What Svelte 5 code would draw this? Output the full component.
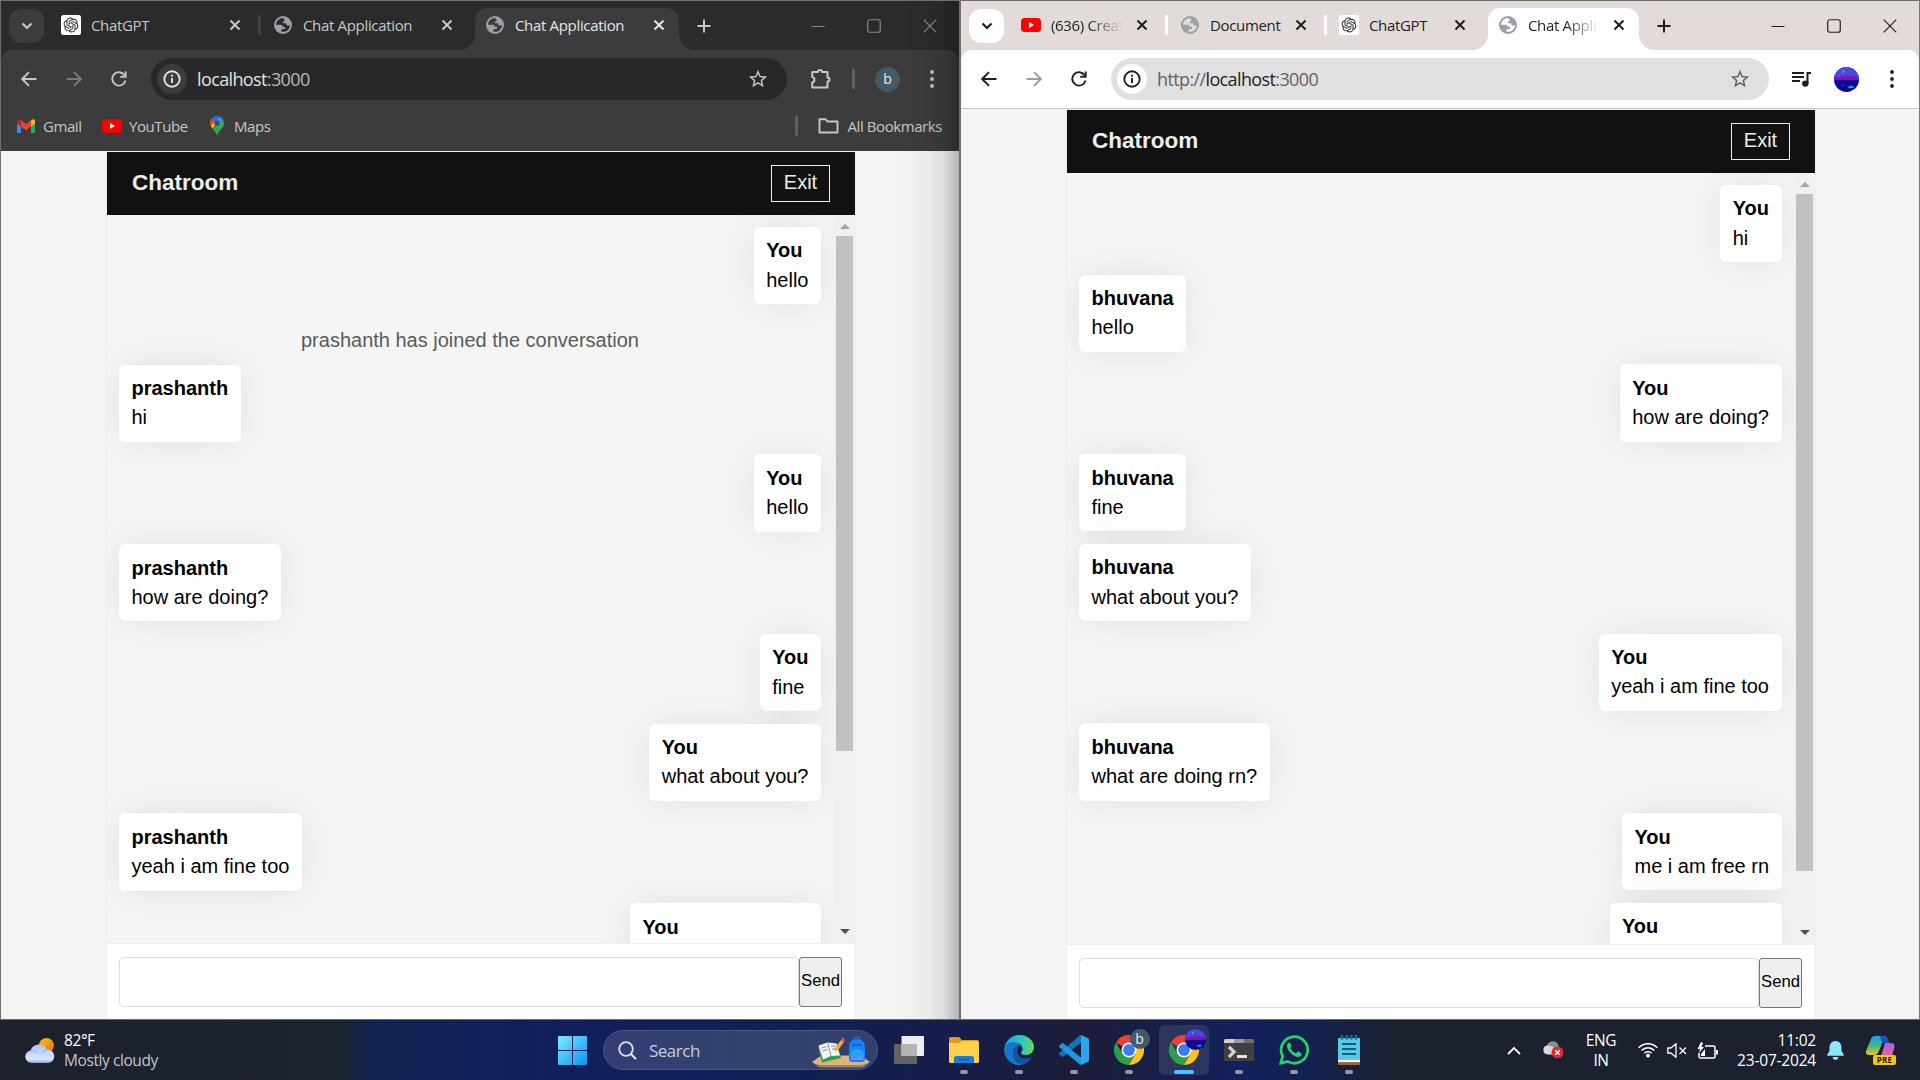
<script>
  const windows = [
    {
      theme: 'dark',
      tabs: [
        { icon: 'gpt', title: 'ChatGPT' },
        { icon: 'globe', title: 'Chat Application' },
        { icon: 'globe', title: 'Chat Application', active: true }
      ],
      scheme: '',
      messages: [
        { from: 'You', text: 'hello', mine: true },
        { update: 'prashanth has joined the conversation' },
        { from: 'prashanth', text: 'hi' },
        { from: 'You', text: 'hello', mine: true },
        { from: 'prashanth', text: 'how are doing?' },
        { from: 'You', text: 'fine', mine: true },
        { from: 'You', text: 'what about you?', mine: true },
        { from: 'prashanth', text: 'yeah i am fine too' },
        { from: 'You', width: 166, mine: true }
      ]
    },
    {
      theme: 'light',
      tabs: [
        { icon: 'youtube', title: '(636) Creat', fade: true },
        { icon: 'globe', title: 'Document' },
        { icon: 'gpt', title: 'ChatGPT' },
        { icon: 'globe', title: 'Chat Appli', fade: true, active: true }
      ],
      scheme: 'http://',
      messages: [
        { from: 'You', text: 'hi', mine: true },
        { from: 'bhuvana', text: 'hello' },
        { from: 'You', text: 'how are doing?', mine: true },
        { from: 'bhuvana', text: 'fine' },
        { from: 'bhuvana', text: 'what about you?' },
        { from: 'You', text: 'yeah i am fine too', mine: true },
        { from: 'bhuvana', text: 'what are doing rn?' },
        { from: 'You', text: 'me i am free rn', mine: true },
        { from: 'You', width: 147, mine: true }
      ]
    }
  ];
  const apps = ['explorer', 'edge', 'code', 'chromeB', 'chromeP', 'terminal', 'whatsapp', 'notepad'];
</script>

{#snippet youtube()}
  <svg width="20" height="14" viewBox="0 0 20 14"><rect width="20" height="14" rx="3.5" fill="#f00" /><path d="M8 4l5 3-5 3z" fill="#fff" /></svg>
{/snippet}

{#snippet favicon(name)}
  {#if name === 'gpt'}
    <svg width="20" height="20" viewBox="0 0 20 20"><rect width="20" height="20" rx="2.5" fill="#fff" />
      <path transform="translate(2.6 2.6) scale(.617)" fill="#222" d="M22.2819 9.8211a5.9847 5.9847 0 0 0-.5157-4.9108 6.0462 6.0462 0 0 0-6.5098-2.9A6.0651 6.0651 0 0 0 4.9807 4.1818a5.9847 5.9847 0 0 0-3.9977 2.9 6.0462 6.0462 0 0 0 .7427 7.0966 5.98 5.98 0 0 0 .511 4.9107 6.051 6.051 0 0 0 6.5146 2.9001A5.9847 5.9847 0 0 0 13.2599 24a6.0557 6.0557 0 0 0 5.7718-4.2058 5.9894 5.9894 0 0 0 3.9977-2.9001 6.0557 6.0557 0 0 0-.7475-7.0729zm-9.022 12.6081a4.4755 4.4755 0 0 1-2.8764-1.0408l.1419-.0804 4.7783-2.7582a.7948.7948 0 0 0 .3927-.6813v-6.7369l2.02 1.1686a.071.071 0 0 1 .038.052v5.5826a4.504 4.504 0 0 1-4.4945 4.4944zm-9.6607-4.1254a4.4708 4.4708 0 0 1-.5346-3.0137l.142.0852 4.783 2.7582a.7712.7712 0 0 0 .7806 0l5.8428-3.3685v2.3324a.0804.0804 0 0 1-.0332.0615L9.74 19.9502a4.4992 4.4992 0 0 1-6.1408-1.6464zM2.3408 7.8956a4.485 4.485 0 0 1 2.3655-1.9728V11.6a.7664.7664 0 0 0 .3879.6765l5.8144 3.3543-2.0201 1.1685a.0757.0757 0 0 1-.071 0l-4.8303-2.7865A4.504 4.504 0 0 1 2.3408 7.872zm16.5963 3.8558L13.1038 8.364 15.1192 7.2a.0757.0757 0 0 1 .071 0l4.8303 2.7913a4.4944 4.4944 0 0 1-.6765 8.1042v-5.6772a.79.79 0 0 0-.407-.667zm2.0107-3.0231l-.142-.0852-4.7735-2.7818a.7759.7759 0 0 0-.7854 0L9.409 9.2297V6.8974a.0662.0662 0 0 1 .0284-.0615l4.8303-2.7866a4.4992 4.4992 0 0 1 6.6802 4.66zM8.3065 12.863l-2.02-1.1638a.0804.0804 0 0 1-.038-.0567V6.0742a4.4992 4.4992 0 0 1 7.3757-3.4537l-.142.0805L8.704 5.459a.7948.7948 0 0 0-.3927.6813zm1.0976-2.3654l2.602-1.4998 2.6069 1.4998v2.9994l-2.5974 1.4997-2.6067-1.4997Z" />
    </svg>
  {:else if name === 'globe'}
    <svg width="18" height="18" viewBox="0 0 18 18"><circle cx="9" cy="9" r="9" fill="#9aa0a6" />
      <path class="cut" d="M9.500 2C5.500 1.800 2.200 4.800 2 8.800h4.200c1.600 0 2.400 .6 2.600 1.900h2.200v2.300H8.200c-.6 .4-.9 1.300-.9 2.600 4.900 1.100 8.500-2.200 8.700-6.600-1.200 .9-2.500 .8-3.300 0-.5-.5-.6-1-.6-1.700H8.800V5.600c1.300 0 1.900-.8 1.900-1.700C9.900 3.600 9.500 3 9.500 2z" />
    </svg>
  {:else}
    {@render youtube()}
  {/if}
{/snippet}

{#snippet cross()}
  <svg class="cross" width="12" height="12" viewBox="0 0 12 12"><path d="M1.500 1.500l9 9M10.500 1.500l-9 9" stroke="currentColor" stroke-width="2" fill="none" /></svg>
{/snippet}

{#snippet cityAvatar(size)}
  <svg width={size} height={size} viewBox="0 0 26 26">
    <circle cx="13" cy="13" r="13" fill="#08089a" />
    <path d="M0 13a13 13 0 0 1 26 0z" fill="#4a48e0" />
    <path d="M.3 14v-2.500l3-2 2 1.500 2-2 2 1.500 1.500-2.500 2 2 1-3 1.500 3 2.500-2 1.500 2 2-1.500 3 2.500V14z" fill="#7d12b8" />
    <path d="M1 14h24v.8H1z" fill="#1c0a66" />
    <path d="M8.500 3.500q2 1 0 3 2.500-.5 1.500-3z" fill="#f5d020" />
    <path d="M14 20.500h7l-1 1.300h-5zM16 19.500h4v1h-4z" fill="#18a8b0" />
    <circle cx="9" cy="19" r=".8" fill="#a03060" />
  </svg>
{/snippet}

{#snippet chrome()}
  <svg width="30" height="30" viewBox="0 0 30 30">
    <path d="M15 15L2 7.500A15 15 0 0 1 28 7.500H15z" fill="#ea4335" />
    <path d="M2 7.500A15 15 0 0 0 15 30l6.500-11.250L8.500 18.750z" fill="#2d9e49" />
    <path d="M28 7.500A15 15 0 0 1 15 30l6.500-11.250Q23 13 18 7.500z" fill="#fcc31e" />
    <circle cx="15" cy="15" r="7.500" fill="#fff" /><circle cx="15" cy="15" r="5.900" fill="#3b7ded" />
  </svg>
{/snippet}

<div class="desktop">
  <div class="windows">
    {#each windows as win}
      <section class="window {win.theme}">
        <div class="tabstrip">
          <div class="dropdown"><svg width="12" height="8" viewBox="0 0 12 8"><path d="M1.500 1.500L6 6l4.500-4.500" fill="none" stroke="currentColor" stroke-width="2.200" /></svg></div>
          <div class="tabs">
            {#each win.tabs as tab, i}
              <div class="tab" class:active={tab.active} class:divided={!tab.active && !win.tabs[i + 1].active}>
                <span class="fav">{@render favicon(tab.icon)}</span>
                <span class="title" class:fade={tab.fade}>{tab.title}</span>
                {@render cross()}
              </div>
            {/each}
          </div>
          <svg class="plus" width="14" height="14" viewBox="0 0 14 14"><path d="M7 .5v13M.5 7h13" stroke="currentColor" stroke-width="2" /></svg>
          <div class="controls">
            <svg width="14" height="14" viewBox="0 0 14 14"><path d="M.5 7.500h13" stroke="currentColor" /></svg>
            <svg width="14" height="14" viewBox="0 0 14 14"><rect x=".75" y=".75" width="12.500" height="12.500" rx="2" fill="none" stroke="currentColor" stroke-width="1.200" /></svg>
            <svg width="14" height="14" viewBox="0 0 14 14"><path d="M.7 .7l12.600 12.600M13.300 .7L.7 13.300" stroke="currentColor" stroke-width="1.200" /></svg>
          </div>
        </div>

        <div class="toolbar">
          <svg class="nav" width="16" height="16" viewBox="0 0 16 16"><path d="M15.500 8H1.500M8 1.200L1.200 8 8 14.800" fill="none" stroke="currentColor" stroke-width="1.900" /></svg>
          <svg class="nav dim" width="16" height="16" viewBox="0 0 16 16"><path d="M.5 8h14M8 1.200L14.800 8 8 14.800" fill="none" stroke="currentColor" stroke-width="1.900" /></svg>
          <svg class="nav" width="16" height="16" viewBox="0 0 16 16"><path d="M13.600 4.200A6.700 6.700 0 1 0 14.500 9.500M14.700 .5v5.300H9.300" fill="none" stroke="currentColor" stroke-width="1.900" /></svg>
          <div class="omnibox">
            <span class="info"><svg width="18" height="18" viewBox="0 0 18 18"><circle cx="9" cy="9" r="7.700" fill="none" stroke="currentColor" stroke-width="1.900" /><path d="M9 8v5M9 4.800v2" stroke="currentColor" stroke-width="1.900" /></svg></span>
            <span class="url"><i>{win.scheme}</i>localhost<i>:3000</i></span>
            <svg class="star" width="22" height="22" viewBox="0 0 24 24"><path fill="currentColor" d="M22 9.240l-7.190-.62L12 2 9.190 8.630 2 9.240l5.460 4.730L5.820 21 12 17.270 18.180 21l-1.630-7.030L22 9.240zM12 15.400l-3.760 2.270 1-4.280-3.320-2.880 4.380-.38L12 6.100l1.710 4.040 4.380 .38-3.320 2.880 1 4.280L12 15.400z" /></svg>
          </div>
          <div class="tools">
            {#if win.theme === 'dark'}
              <svg width="22" height="22" viewBox="0 0 22 22"><path d="M2.200 4H8a2 2 0 0 1 4 0h5.500v5.500a2 2 0 0 1 0 4V19.500H2.200v-5a2.800 2.800 0 0 0 0-5.500z" fill="none" stroke="currentColor" stroke-width="2" stroke-linejoin="round" /></svg>
              <span class="bar"></span>
              <span class="letter">b</span>
            {:else}
              <svg class="queue" width="20" height="16" viewBox="0 0 20 16"><path d="M0 2h12M0 6h12M0 10h8" stroke="currentColor" stroke-width="1.900" /><path d="M15.500 12.500V2H19" fill="none" stroke="currentColor" stroke-width="2" /><circle cx="13.300" cy="12.600" r="3.200" fill="currentColor" /></svg>
              {@render cityAvatar(25)}
            {/if}
            <svg class="dots" width="4" height="18" viewBox="0 0 4 18"><g fill="currentColor"><circle cx="2" cy="2" r="1.900" /><circle cx="2" cy="9" r="1.900" /><circle cx="2" cy="16" r="1.900" /></g></svg>
          </div>
        </div>

        {#if win.theme === 'dark'}
          <div class="bookmarks">
            <span class="bm gmail"><svg width="18" height="14" viewBox="0 0 18 14"><path d="M0 2v11q0 1 1 1h3V5z" fill="#4285f4" /><path d="M18 2v11q0 1-1 1h-3V5z" fill="#34a853" /><path d="M14 1.200L16 .2q2 0 2 2v2.300l-4 3z" fill="#fbbc04" /><path d="M0 2q0-1.800 2-1.800l2 1v6.300l-4-3z" fill="#c5221f" /><path d="M4 1.200l5 3.800 5-3.800v6.300l-5 3.800-5-3.800z" fill="#ea4335" /></svg>Gmail</span>
            <span class="bm yt">{@render youtube()}YouTube</span>
            <span class="bm maps"><svg width="14" height="20" viewBox="0 0 14 20"><path d="M7 0a7 7 0 0 0-5.400 2.500L5 5.400 9.200 .4A7 7 0 0 0 7 0z" fill="#1a73e8" /><path d="M1.600 2.500A7 7 0 0 0 .7 10L5 5.300z" fill="#ea4335" /><path d="M9.200 .4A7 7 0 0 1 13.300 4L9 9 5 5.400z" fill="#4285f4" /><path d="M.7 10l1.800 2.600L9 5 5 5.300z" fill="#fbbc04" /><path d="M13.300 4c1.300 3 .5 6-1.300 8.200C9.500 15.200 8.500 16 7 20c-1-4-2.800-5-4.500-7.400z" fill="#34a853" /><circle cx="7" cy="7" r="2.600" fill="#2b4c7e" /></svg>Maps</span>
            <span class="all"><span class="bar"></span><svg width="21" height="16" viewBox="0 0 21 16"><path d="M1.500 1.200h6l2 2.300h10v11H1.500z" fill="none" stroke="currentColor" stroke-width="1.900" stroke-linejoin="round" /></svg>All Bookmarks</span>
          </div>
        {/if}

        <div class="page">
          <div class="chat">
            <header><h1>Chatroom</h1><button class="exit">Exit</button></header>
            <div class="body">
              <div class="messages">
                {#each win.messages as m}
                  {#if m.update}
                    <div class="update">{m.update}</div>
                  {:else}
                    <div class="message" class:mine={m.mine} style:width={m.width ? `${m.width}px` : null}>
                      <b>{m.from}</b>{#if m.text}<span>{m.text}</span>{/if}
                    </div>
                  {/if}
                {/each}
              </div>
              <div class="scroll">
                <svg class="up" width="10" height="5" viewBox="0 0 10 5"><path d="M0 5L5 0l5 5z" fill="#a3a3a3" /></svg>
                <div class="track"><div class="thumb"></div></div>
                <svg class="down" width="10" height="5" viewBox="0 0 10 5"><path d="M0 0l5 5 5-5z" fill="#505050" /></svg>
              </div>
            </div>
            <footer><div class="field"></div><button class="send">Send</button></footer>
          </div>
        </div>
      </section>
    {/each}
  </div>

  <div class="taskbar">
    <div class="weather">
      <svg width="30" height="25" viewBox="0 0 30 25">
        <defs>
          <linearGradient id="sun" x1="0" y1="0" x2="1" y2="1"><stop offset="0" stop-color="#f9c22e" /><stop offset="1" stop-color="#ee6a10" /></linearGradient>
          <linearGradient id="cloud" x1="0" y1="0" x2="0" y2="1"><stop offset="0" stop-color="#a9c4f5" /><stop offset=".8" stop-color="#dbe7fb" /><stop offset="1" stop-color="#7fa3e4" /></linearGradient>
        </defs>
        <circle cx="21.500" cy="7.500" r="7.500" fill="url(#sun)" />
        <path d="M6.500 25a6.300 6.300 0 0 1-1-12.500A9 9 0 0 1 22 11.500 6.800 6.800 0 0 1 23.500 25z" fill="url(#cloud)" />
        <path d="M5.500 12.500q4-.5 7 2.500M17 15q2-3.500 6-3.500" stroke="#8fb0ea" fill="none" />
      </svg>
      <div><p>82°F</p><p class="sub">Mostly cloudy</p></div>
    </div>

    <div class="center">
      <svg class="start" width="29" height="29" viewBox="0 0 29 29">
        <defs><linearGradient id="win" gradientUnits="userSpaceOnUse" x1="0" y1="0" x2="29" y2="29"><stop offset="0" stop-color="#7deaff" /><stop offset="1" stop-color="#0a95f6" /></linearGradient></defs>
        <path d="M0 1q0-1 1-1h13v14H0zM15 0h13q1 0 1 1v13H15zM0 15h14v14H1q-1 0-1-1zM15 15h14v13q0 1-1 1H15z" fill="url(#win)" />
      </svg>
      <div class="search">
        <svg width="19" height="19" viewBox="0 0 19 19"><circle cx="8" cy="8" r="6.800" fill="none" stroke="#dfe2ea" stroke-width="1.800" /><path d="M13 13l5 5" stroke="#dfe2ea" stroke-width="2.200" /></svg>
        <span>Search</span>
        <svg class="school" width="58" height="32" viewBox="0 0 58 32">
          <path d="M0 26l7-5q2-1.500 5-1.500h34q3 0 5 1.500l7 5-6 4q-2 1-4 1H11q-3 0-5-1z" fill="#d8b384" /><path d="M1 27l5 3.500q2 1 5 1h37q3 0 4-1l5-3.500-7 2H8z" fill="#a87f50" />
          <path d="M6 11.500L25 8l4 14-19 4.500z" fill="#2f9a52" /><path d="M6.500 9.500l9-3 9 1 3.500 12-9 .5-8 3.500z" fill="#f2f3f6" /><path d="M15.500 6.500l3.500 13.500M9.500 12l5-1.500M10.500 15l5-1.500M19 10l4.500 0M20 13h4.500" stroke="#8990a8" fill="none" />
          <path d="M23 12l6-8 3 2-6 8-3.500 1.500z" fill="#f7a934" /><path d="M29 4l1.500-2.500 2.500 2L32 6z" fill="#e2504a" />
          <path d="M42 5q0-4 3-4t3 4" fill="none" stroke="#1668d0" stroke-width="1.500" /><path d="M37 12q0-9 8-9t8 9v11q0 3-3 3H40q-3 0-3-3z" fill="#1583f5" /><path d="M38.500 18q1-5 6.500-5t7 5v4H38.500z" fill="#25a4ff" /><path d="M39 22h12v2H39z" fill="#9e7cf5" /><path d="M40 9h10" stroke="#0b4fb8" />
        </svg>
      </div>
      <div class="cell">
        <svg width="30" height="28" viewBox="0 0 30 28"><rect y="8" width="23" height="20" rx="1" fill="#636363" /><rect x="7.500" width="22.500" height="20" rx="1" fill="#eee" /><path d="M7.500 8H23v12H7.500z" fill="#b4b4b4" /></svg>
      </div>
      {#each apps as app}
        <div class="cell app" class:current={app === 'chromeP'}>
          {#if app === 'explorer'}
            <svg width="30" height="27" viewBox="0 0 30 27"><path d="M0 2q0-2 2-2h8l3 3h15q2 0 2 2v6H0z" fill="#dc9c14" /><path d="M0 6h11l2-2h15q2 0 2 2v19q0 1-2 1H2q-2 0-2-1z" fill="#ffd04a" /><path d="M5 26v-5q0-2 2-2h16q2 0 2 2v5z" fill="#1480d8" /><path d="M10 22.500h10" stroke="#0c5ba8" stroke-width="1.500" /></svg>
          {:else if app === 'edge'}
            <svg width="30" height="30" viewBox="0 0 30 30">
              <defs><linearGradient id="edgeTop"><stop offset="0" stop-color="#1a9fe0" /><stop offset=".55" stop-color="#2cc4cc" /><stop offset="1" stop-color="#66dd55" /></linearGradient></defs>
              <path d="M.3 14A15 15 0 0 1 15 0c9 0 15 6 15 12 0 5-4 8-8 8-3 0-5-1-5-2 0-1 2-2 1.500-4.500C18 9 14 7.500 10 7.500 5 7.500 1.500 10 .3 14z" fill="url(#edgeTop)" />
              <path d="M.1 14C1 10 5 7.500 10 7.500c3 0 5.500 1 7 3C12 10 9 14 9 18c0 6 4 10.500 10 11.500A15 15 0 0 1 .1 14z" fill="#1377cc" />
              <path d="M17 10.500C12 10 9 14 9 18c0 6 4.500 11 10 11.500 4-1.500 7-4 8.500-7.500-8 4-15-1-14-7 .3-2 1.500-4 3.500-4.500z" fill="#1455a2" />
            </svg>
          {:else if app === 'code'}
            <svg width="30" height="30" viewBox="0 0 30 30"><path d="M22 0l7 3.200q1 .5 1 1.500v20.600q0 1-1 1.500L22 30z" fill="#27a7f2" /><path d="M22 7.500L4.500 21.500q-1 .8-1.800 0L.5 19.700q-1-1 0-2L20.500 .7 22 0z" fill="#1173b8" /><path d="M22 22.500L4.500 8.500q-1-.8-1.800 0L.5 10.300q-1 1 0 2l20 17L22 30z" fill="#2196e3" /></svg>
          {:else if app === 'chromeB'}
            {@render chrome()}<span class="badge letter">b</span>
          {:else if app === 'chromeP'}
            {@render chrome()}<span class="badge">{@render cityAvatar(21)}</span>
          {:else if app === 'terminal'}
            <svg width="30" height="22" viewBox="0 0 30 22"><rect width="30" height="22" rx="1.500" fill="#404040" /><path d="M0 4V1.500Q0 0 1.500 0H10v4z" fill="#cfcfcf" /><path d="M10 0h10v4H10z" fill="#9a9a9a" /><path d="M20 0h8.500Q30 0 30 1.500V4H20z" fill="#6f6f6f" /><path d="M5 8l5 4.700L5 18" fill="none" stroke="#d5d5d5" stroke-width="3.200" /><path d="M13 17.500h10" stroke="#f2f2f2" stroke-width="2.800" /></svg>
          {:else if app === 'whatsapp'}
            <svg width="30" height="30" viewBox="0 0 30 30"><path d="M1.800 28.200l1.900-6.900A13.300 13.300 0 1 1 8.600 26.400z" fill="none" stroke="#25d366" stroke-width="2.700" /><path d="M10.600 7.500c-1.700 .3-3 2-2.700 4C8.500 15.500 14 21.500 18.700 22c2 .2 4-1.200 4-3.300 0-.6-3.500-2.500-4-2.300-.7 .2-1.300 2-2 1.900-2-.6-4.800-3.200-5.500-5.200-.2-.7 1.300-1.600 1.300-2.300 0-.5-1.300-3.300-1.900-3.300z" fill="#25d366" /></svg>
          {:else}
            <svg width="22" height="30" viewBox="0 0 22 30"><path d="M0 3h22v23H0z" fill="#5cc8e4" /><path d="M0 25h22v2.500H0z" fill="#f3f3f3" /><path d="M0 27.500h22V30H0z" fill="#b25c14" /><path d="M4 9h14M4 14h14M4 19h14" stroke="#0a5f85" stroke-width="1.800" /><path d="M4 0v4.500M8.700 0v4.500M13.300 0v4.500M18 0v4.500" stroke="#0d7396" stroke-width="2.600" /></svg>
          {/if}
          <span class="pill"></span>
        </div>
      {/each}
    </div>

    <div class="tray">
      <svg class="chev" width="14" height="9" viewBox="0 0 14 9"><path d="M1 8l6-6 6 6" fill="none" stroke="#fff" stroke-width="1.800" /></svg>
      <svg class="drive" width="21" height="18" viewBox="0 0 21 18"><path d="M4.500 13A4.500 4.500 0 0 1 4 4.500 6 6 0 0 1 15 3.500l1.500 4V13z" fill="#8c8c8c" /><path d="M4.500 13.500A4.500 4.500 0 0 1 4 4.600C7 4 10 6 15 9v4.500z" fill="#d9d9d9" /><circle cx="14.500" cy="11.500" r="6" fill="#d92b34" /><path d="M12.300 9.300l4.400 4.400M16.700 9.300l-4.400 4.400" stroke="#fff" stroke-width="1.500" /></svg>
      <div class="lang">ENG<br />IN</div>
      <svg class="wifi" width="20" height="16" viewBox="0 0 20 16"><g fill="none" stroke="#fff" stroke-width="1.400"><path d="M.6 5.800a13 13 0 0 1 18.800 0M3.500 8.600a9 9 0 0 1 13 0M6.300 11.300a5.200 5.200 0 0 1 7.400 0" /></g><circle cx="10" cy="13.700" r="1.900" fill="#fff" /></svg>
      <svg class="vol" width="20" height="15" viewBox="0 0 20 15"><path d="M.8 5v5h3L9 14.200V.8L3.800 5zM12.500 4.500l6.500 6.500M19 4.500L12.500 11" fill="none" stroke="#fff" stroke-width="1.300" /></svg>
      <svg class="batt" width="21" height="17" viewBox="0 0 21 17"><path d="M8 4h8.500q1.500 0 1.500 1.500v9q0 1.500-1.500 1.500H3.500Q2 16 2 14.500V11" fill="none" stroke="#fff" stroke-width="1.500" /><path d="M19 8h2v4.500h-2z" fill="#fff" /><path d="M4 0L.5 7H3L2 11l5-6H4.500L6 1zM4 12l4-5v7H4z" fill="#fff" /></svg>
      <div class="clock">11:02<br />23-07-2024</div>
      <svg class="bell" width="17" height="19" viewBox="0 0 17 19"><path d="M8.500 0C4.500 0 2.500 3 2.500 6.500V10L.3 13.500q-.5 1.300 .7 1.300h15q1.200 0 .7-1.300L14.500 10V6.500C14.500 3 12.500 0 8.500 0zM5.500 16h6q-.6 3-3 3t-3-3z" fill="#8ce6fc" /></svg>
      <div class="copilot">
        <svg width="29" height="28" viewBox="0 0 29 28">
          <defs><linearGradient id="cpA" x1="0" y1="0" x2="0" y2="1"><stop offset="0" stop-color="#1aa0ea" /><stop offset=".5" stop-color="#3fb58a" /><stop offset="1" stop-color="#f5c518" /></linearGradient><linearGradient id="cpB" x1="0" y1="0" x2="0" y2="1"><stop offset="0" stop-color="#a95cf0" /><stop offset="1" stop-color="#f06a7c" /></linearGradient></defs>
          <path d="M5 3q1-3 4-3h10l-6 15q-1.500 4-5 4H3q-4 0-3-4z" fill="url(#cpA)" /><path d="M14 0h4q3 0 4 3l1 4h-5q-2 0-3-3z" fill="#1c50d0" /><path d="M19 7h6q4 0 3.500 4L26 20q-.7 2-3 2H12q3-1 4-5z" fill="url(#cpB)" />
        </svg>
        <span>PRE</span>
      </div>
    </div>
  </div>
</div>

<style>
  :global(body) { background: #1c212c; overflow: hidden; }
  .desktop { width: 1920px; height: 1080px; display: flex; flex-direction: column; font-family: 'Open Sans', 'Noto Sans', sans-serif; }
  svg { display: block; flex: none; }
  p { margin: 0; }

  .windows { height: 1019px; display: grid; grid-template-columns: 960px 960px; border-bottom: 1px solid #65696c; }
  .window { position: relative; box-sizing: border-box; display: flex; flex-direction: column; border-top: 1px solid #6f6f6f; border-left: 1px solid #6f6f6f; overflow: hidden; background: var(--strip); color: var(--ink); }
  .dark { --strip: #2b2b2b; --bar: #3c3c3c; --box: #282828; --chip: #3c3c3c; --ink: #c7c7c7; --soft: #b9b9b9; --dim: #7c7c7c; --sep: #404040; --url: #e3e3e3; --ctl: #888; border-right: 1px solid #707070; }
  .light { --strip: #e3dbd9; --bar: #fff; --box: #e0e0e0; --chip: #fff; --ink: #1f1f1f; --soft: #646464; --dim: #9c9c9c; --sep: #fff; --url: #1f1f1f; --ctl: #1f1f1f; border-right: 1px solid #7b7775; }
  .dark::after { content: ''; position: absolute; top: 0; right: 0; bottom: 0; width: 60px; background: linear-gradient(90deg, transparent, rgba(0, 0, 0, .03) 45%, rgba(0, 0, 0, .1) 75%, rgba(0, 0, 0, .26)); pointer-events: none; }

  .tabstrip { height: 49px; flex: none; display: flex; align-items: center; padding-left: 8px; position: relative; }
  .dropdown { width: 35px; height: 34px; border-radius: 12px; background: var(--chip); display: grid; place-items: center; }
  .tabs { display: flex; align-self: flex-end; gap: 8px; margin-left: 7px; }
  .tab { position: relative; box-sizing: border-box; width: 204px; height: 42px; padding: 0 14px 8px 10px; display: flex; align-items: center; font-size: 15px; letter-spacing: -.33px; }
  .light .tab { width: 151px; }
  .fav { width: 20px; display: grid; place-items: center; }
  .cut { fill: var(--strip); }
  .active .cut { fill: var(--bar); }
  .title { flex: 1; margin: 0 0 0 10px; white-space: nowrap; }
  .fade { mask-image: linear-gradient(90deg, #000 44%, transparent 84%); }
  .active { background: var(--bar); border-radius: 12px 12px 0 0; }
  .dark .active { color: #e6e6e6; }
  .active::before, .active::after { content: ''; position: absolute; bottom: 0; width: 15px; height: 15px; }
  .active::before { right: 100%; background: radial-gradient(circle at 0 0, transparent 14.500px, var(--bar) 15px); }
  .active::after { left: 100%; background: radial-gradient(circle at 100% 0, transparent 14.500px, var(--bar) 15px); }
  .divided::after { content: ''; position: absolute; right: -6px; top: 7px; width: 3px; height: 20px; border-radius: 1px; background: var(--sep); }
  .plus { margin-left: 18px; }
  .controls { margin-left: auto; display: flex; gap: 42px; padding-right: 22px; color: var(--ctl); }

  .toolbar { height: 58px; flex: none; display: flex; align-items: center; padding-left: 20px; background: var(--bar); border-radius: 11px 11px 0 0; }
  .light .toolbar { border-bottom: 1px solid #c8c8c8; }
  .nav { margin-right: 29px; }
  .dim { color: var(--dim); }
  .omnibox { width: 636px; height: 42px; box-sizing: border-box; margin-left: -5px; padding: 0 18px 0 6px; border-radius: 21px; background: var(--box); display: flex; align-items: center; }
  .light .omnibox { width: 658px; }
  .info { width: 30px; height: 30px; border-radius: 50%; background: var(--chip); display: grid; place-items: center; color: var(--url); }
  .url { margin-left: 10px; flex: 1; font-size: 18px; letter-spacing: -.62px; color: var(--url); }
  .url i { font-style: normal; color: var(--soft); }
  .light .star { color: #5f5f5f; }
  .tools { flex: 1; display: flex; align-items: center; justify-content: flex-end; padding-right: 25px; gap: 30px; }
  .light .tools { padding-right: 25px; gap: 31px; }
  .queue { margin-right: -9px; }
  .tools .bar { margin: 0 -1px 0 -10px; }
  .tools .bar + .letter { margin-left: -9px; }
  .bar { width: 3px; height: 20px; border-radius: 1px; background: #606060; }
  .letter { width: 25px; height: 25px; border-radius: 50%; background: #455a66; color: #eee; font-size: 14px; line-height: 24px; text-align: center; }

  .bookmarks { height: 43px; flex: none; display: flex; align-items: center; box-sizing: border-box; padding: 0 17px 8px 16px; background: var(--bar); font-size: 15px; letter-spacing: -.42px; }
  .bm { display: flex; align-items: center; }
  .gmail { width: 85px; gap: 8px; }
  .yt { width: 108px; gap: 7px; }
  .maps { gap: 10px; }
  .all { margin-left: auto; display: flex; align-items: center; gap: 9px; }
  .all .bar { margin-right: 11px; }

  .page { flex: 1; min-height: 0; padding: 1px 104px 0 106px; background: #f4f4f4; display: flex; font-family: 'Liberation Sans', Arial, sans-serif; font-size: 20px; color: #000; }
  .chat { flex: 1; display: flex; flex-direction: column; min-width: 0; box-shadow: 0 0 0 1px #eee; }
  header { height: 63px; flex: none; box-sizing: border-box; padding: 0 25px; background: #111; display: flex; align-items: center; justify-content: space-between; color: #eee; }
  h1 { margin: 0 0 2px; font-size: 22.500px; line-height: 27px; }
  button { font-family: inherit; padding: 0; }
  .exit { width: 59px; height: 37px; border: 1px solid #eee; background: none; color: #eee; font-size: 20px; padding-bottom: 2px; }
  .body { flex: 1; min-height: 0; display: flex; overflow: hidden; background: #f5f5f5; }
  .messages { flex: 1; min-height: 0; overflow: hidden; padding: 11.800px 13px 0 12px; }
  .light .messages { padding-right: 12.500px; }
  .message { width: fit-content; height: 52.250px; margin-bottom: 12.500px; padding: 12.500px; background: #fff; border-radius: 6px; box-shadow: 0 0 37px rgba(0, 0, 0, .08); }
  .message b, .message span { display: block; line-height: 23px; }
  .message b { margin-bottom: 6.250px; }
  .mine { margin-left: auto; }
  .update { padding: 12.500px 0; height: 23px; line-height: 23px; text-align: center; color: #5a5a5a; }
  .scroll { width: 21px; box-sizing: border-box; padding: 9px 0 9px 2px; background: #f0f0f0; display: flex; flex-direction: column; }
  .up, .down { margin-left: 4px; }
  .track { flex: 1; margin: 7px 0 11px; }
  .thumb { width: 17px; height: 515px; background: #c1c1c1; }
  .light .thumb { height: 677px; }
  footer { height: 76px; flex: none; box-sizing: border-box; padding: 13px 13px 12px 12px; border-top: 1px solid #eee; background: #fff; display: flex; }
  .light footer { height: 75px; padding-bottom: 11px; }
  .field { flex: 1; border: 1px solid #ddd; border-radius: 5px; }
  .send { width: 43px; border: 1px solid #767676; border-radius: 3px; background: #efefef; color: #000; font-size: 16.670px; padding-bottom: 2px; }

  .taskbar { flex: 1; display: flex; align-items: center; position: relative; background: linear-gradient(90deg, #1c212c 0, #1c2431 340px, #112452 375px, #121f5c 560px, #0f2054 780px, #171d4a 950px, #1c1d38 1080px, #13205a 1240px, #12214e 1310px, #1b212e 1400px); color: #fff; }
  .weather { width: 533px; padding-left: 25px; display: flex; align-items: center; gap: 9px; font-size: 15.500px; letter-spacing: -.42px; line-height: 20px; }
  .weather div, .lang, .clock { padding-bottom: 1px; }
  .sub { color: #c3c6cb; }
  .center { display: flex; align-items: center; }
  .start { margin-right: 16px; }
  .search { width: 275px; height: 40px; box-sizing: border-box; border: 1px solid #4d5685; border-radius: 20px; background: linear-gradient(90deg, #343d75, #30456b 60%, #333f72); display: flex; align-items: center; padding: 0 7px 0 14px; color: #c9cddb; font-size: 17px; letter-spacing: -.5px; }
  .search span { margin-left: 12px; flex: 1; }
  .school { margin: 3px 0 0; }
  .cell { width: 55px; height: 50px; display: grid; place-items: center; position: relative; }
  .search + .cell { margin-left: 4px; width: 54px; }
  .current { background: rgba(255, 255, 255, .1); border-radius: 6px; width: 50px; margin: 0 2.500px; }
  .pill { position: absolute; bottom: 1px; left: 50%; width: 8px; height: 4px; margin-left: -4px; border-radius: 2px; background: #9598a6; }
  .current .pill { width: 20px; margin-left: -10px; background: #4cc2ff; }
  .badge { position: absolute; left: 50%; top: 4px; margin-left: 1px; }
  .badge.letter { width: 20px; height: 20px; font-size: 14px; line-height: 19px; }
  .tray { position: absolute; right: 0; top: 0; height: 60px; display: flex; align-items: center; padding-right: 25px; font-size: 15.500px; line-height: 20px; letter-spacing: -.2px; }
  .drive { margin-left: 22px; }
  .lang { width: 40px; margin-left: 17px; text-align: center; letter-spacing: -.4px; }
  .wifi { margin-left: 17px; }
  .vol { margin-left: 9px; }
  .batt { margin-left: 10px; }
  .clock { width: 90px; margin-left: 8px; text-align: right; }
  .bell { margin-left: 11px; }
  .copilot { position: relative; margin-left: 22px; }
  .copilot span { position: absolute; left: 7px; bottom: -1px; width: 23px; height: 10px; border-radius: 2px; background: #fcc60c; color: #1c1c1c; font: 700 8px/10px 'Open Sans', sans-serif; letter-spacing: .3px; text-align: center; }
</style>
